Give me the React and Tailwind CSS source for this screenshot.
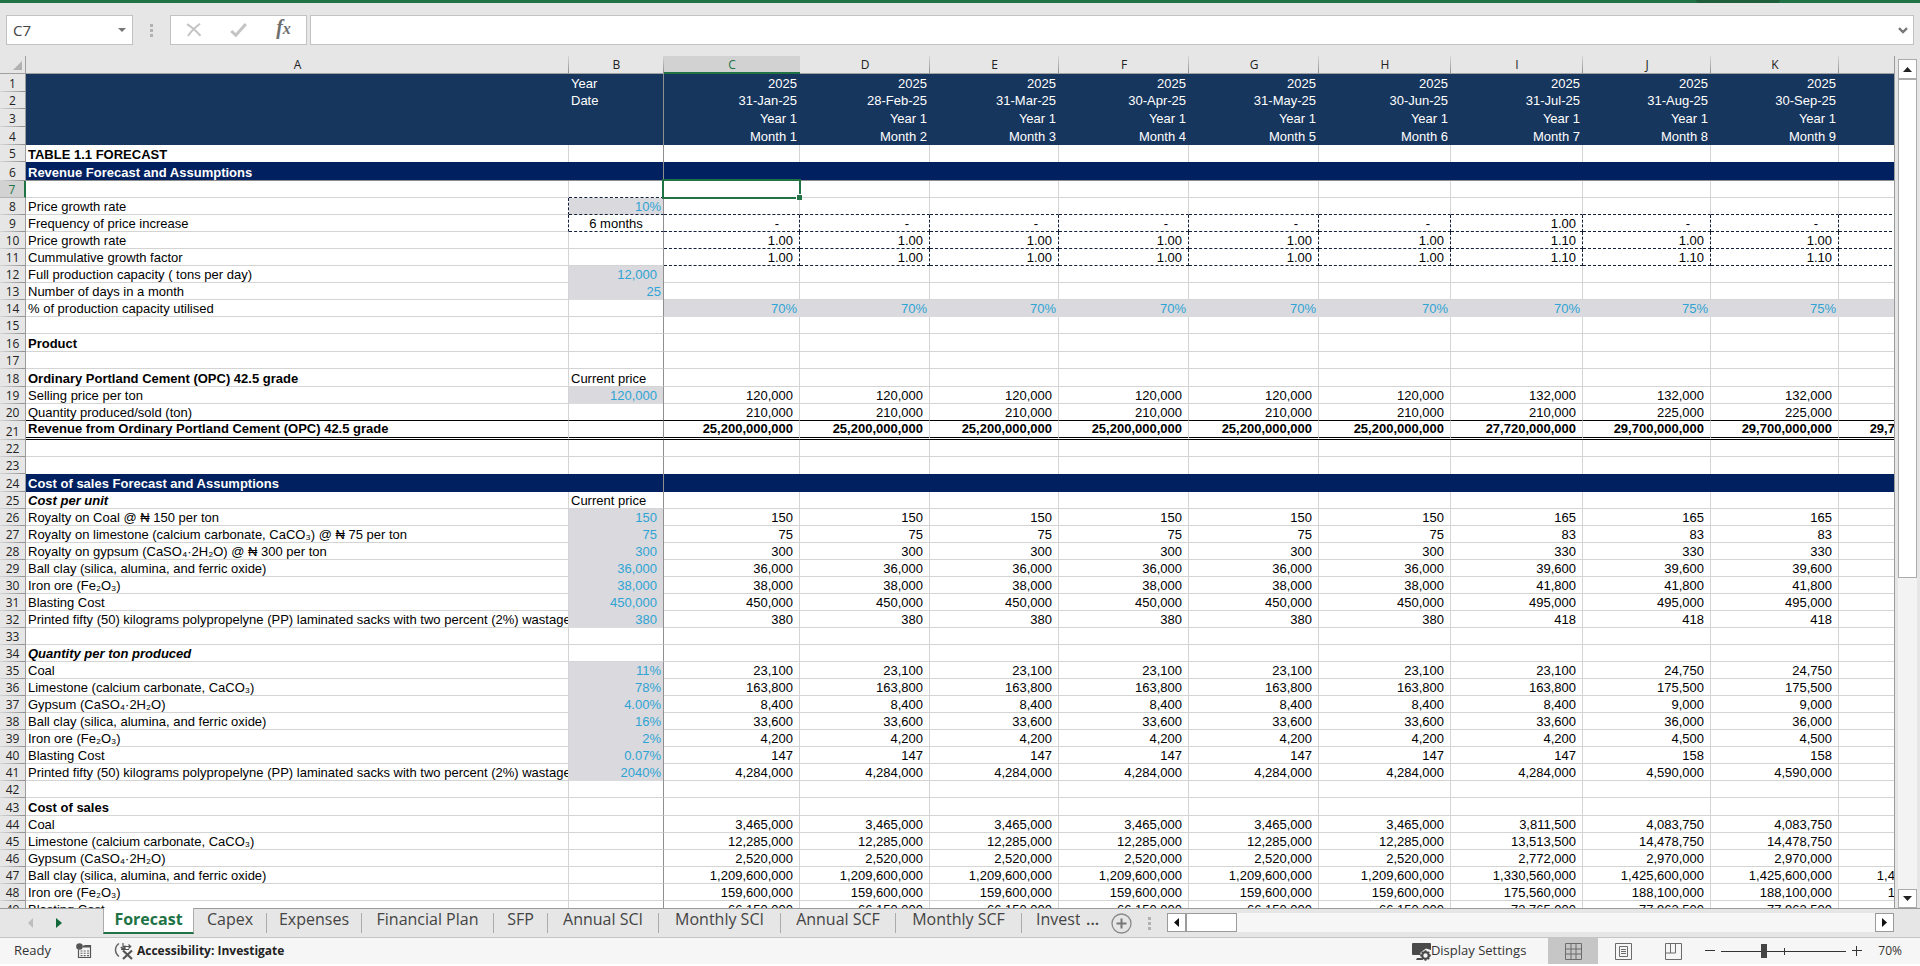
import React from "react";

const COLUMNS = [
  { name: "A", width: "w-[543px]" },
  { name: "B", width: "w-[95px]" },
  { name: "C", width: "w-[136px]" },
  { name: "D", width: "w-[130px]" },
  { name: "E", width: "w-[129px]" },
  { name: "F", width: "w-[130px]" },
  { name: "G", width: "w-[130px]" },
  { name: "H", width: "w-[132px]" },
  { name: "I", width: "w-[132px]" },
  { name: "J", width: "w-[128px]" },
  { name: "K", width: "w-[128px]" },
  { name: "", width: "w-[128px]" },
];

const months = (first, july, later, last = "") => [
  first, first, first, first, first, first, july, later, later, last,
];

const ROWS = [
  { n: 1, kind: "head", h: 18, b: "Year", v: months("2025", "2025", "2025") },
  {
    n: 2, kind: "head", h: 17, b: "Date",
    v: ["31-Jan-25", "28-Feb-25", "31-Mar-25", "30-Apr-25", "31-May-25", "30-Jun-25", "31-Jul-25", "31-Aug-25", "30-Sep-25", ""],
  },
  { n: 3, kind: "head", h: 18, v: months("Year 1", "Year 1", "Year 1") },
  {
    n: 4, kind: "head", h: 18,
    v: ["Month 1", "Month 2", "Month 3", "Month 4", "Month 5", "Month 6", "Month 7", "Month 8", "Month 9", ""],
  },
  { n: 5, h: 17, a: "TABLE 1.1 FORECAST", bold: true },
  { n: 6, kind: "band", h: 19, a: "Revenue Forecast and Assumptions", bold: true },
  { n: 7, h: 17 },
  { n: 8, h: 17, a: "Price growth rate", b: "10%", bStyle: "fill" },
  { n: 9, h: 17, a: "Frequency of price increase", b: "6 months", bStyle: "center", v: months("-", "1.00", "-") },
  { n: 10, h: 17, a: "Price growth rate", v: months("1.00", "1.10", "1.00") },
  { n: 11, h: 17, a: "Cummulative growth factor", v: months("1.00", "1.10", "1.10") },
  { n: 12, h: 17, a: "Full production capacity ( tons per day)", b: "12,000", bStyle: "fill" },
  { n: 13, h: 17, a: "Number of days in a month", b: "25", bStyle: "fill", tight: true },
  { n: 14, kind: "shade", h: 17, a: "% of production capacity utilised", v: months("70%", "70%", "75%") },
  { n: 15, h: 17 },
  { n: 16, h: 18, a: "Product", bold: true },
  { n: 17, h: 17 },
  { n: 18, h: 18, a: "Ordinary Portland Cement (OPC) 42.5 grade", bold: true, b: "Current price" },
  { n: 19, h: 17, a: "Selling price per ton", b: "120,000", bStyle: "fill", v: months("120,000", "132,000", "132,000") },
  { n: 20, h: 17, a: "Quantity produced/sold (ton)", v: months("210,000", "210,000", "225,000") },
  {
    n: 21, kind: "total", h: 19, a: "Revenue from Ordinary Portland Cement (OPC) 42.5 grade", bold: true,
    v: months("25,200,000,000", "27,720,000,000", "29,700,000,000", "29,700,000,000"),
  },
  { n: 22, h: 17 },
  { n: 23, h: 17 },
  { n: 24, kind: "band", h: 18, a: "Cost of sales Forecast and Assumptions", bold: true },
  { n: 25, h: 17, a: "Cost per unit", bold: true, italic: true, b: "Current price" },
  { n: 26, h: 17, a: "Royalty on Coal @ ₦ 150 per ton", b: "150", bStyle: "fill", v: months("150", "165", "165") },
  { n: 27, h: 17, a: "Royalty on limestone (calcium carbonate, CaCO₃) @ ₦ 75 per ton", b: "75", bStyle: "fill", v: months("75", "83", "83") },
  { n: 28, h: 17, a: "Royalty on gypsum (CaSO₄·2H₂O) @ ₦ 300 per ton", b: "300", bStyle: "fill", v: months("300", "330", "330") },
  { n: 29, h: 17, a: "Ball clay (silica, alumina, and ferric oxide)", b: "36,000", bStyle: "fill", v: months("36,000", "39,600", "39,600") },
  { n: 30, h: 17, a: "Iron ore (Fe₂O₃)", b: "38,000", bStyle: "fill", v: months("38,000", "41,800", "41,800") },
  { n: 31, h: 17, a: "Blasting Cost", b: "450,000", bStyle: "fill", v: months("450,000", "495,000", "495,000") },
  {
    n: 32, h: 17, a: "Printed fifty (50) kilograms polypropelyne (PP) laminated sacks with two percent (2%) wastage",
    b: "380", bStyle: "fill", v: months("380", "418", "418"),
  },
  { n: 33, h: 17 },
  { n: 34, h: 17, a: "Quantity per ton produced", bold: true, italic: true },
  { n: 35, h: 17, a: "Coal", b: "11%", bStyle: "fill", v: months("23,100", "23,100", "24,750") },
  { n: 36, h: 17, a: "Limestone (calcium carbonate, CaCO₃)", b: "78%", bStyle: "fill", v: months("163,800", "163,800", "175,500") },
  { n: 37, h: 17, a: "Gypsum (CaSO₄·2H₂O)", b: "4.00%", bStyle: "fill", v: months("8,400", "8,400", "9,000") },
  { n: 38, h: 17, a: "Ball clay (silica, alumina, and ferric oxide)", b: "16%", bStyle: "fill", v: months("33,600", "33,600", "36,000") },
  { n: 39, h: 17, a: "Iron ore (Fe₂O₃)", b: "2%", bStyle: "fill", v: months("4,200", "4,200", "4,500") },
  { n: 40, h: 17, a: "Blasting Cost", b: "0.07%", bStyle: "fill", v: months("147", "147", "158") },
  {
    n: 41, h: 17, a: "Printed fifty (50) kilograms polypropelyne (PP) laminated sacks with two percent (2%) wastage",
    b: "2040%", bStyle: "fill", v: months("4,284,000", "4,284,000", "4,590,000"),
  },
  { n: 42, h: 17 },
  { n: 43, h: 18, a: "Cost of sales", bold: true },
  { n: 44, h: 17, a: "Coal", v: months("3,465,000", "3,811,500", "4,083,750") },
  { n: 45, h: 17, a: "Limestone (calcium carbonate, CaCO₃)", v: months("12,285,000", "13,513,500", "14,478,750") },
  { n: 46, h: 17, a: "Gypsum (CaSO₄·2H₂O)", v: months("2,520,000", "2,772,000", "2,970,000") },
  {
    n: 47, h: 17, a: "Ball clay (silica, alumina, and ferric oxide)",
    v: months("1,209,600,000", "1,330,560,000", "1,425,600,000", "1,425,600,000"),
  },
  { n: 48, h: 17, a: "Iron ore (Fe₂O₃)", v: months("159,600,000", "175,560,000", "188,100,000", "188,100,000") },
  { n: 49, h: 17, a: "Blasting Cost", v: months("66,150,000", "72,765,000", "77,962,500") },
];

const HEIGHTS = { 17: "h-[17px]", 18: "h-[18px]", 19: "h-[19px]" };
const DASH_BOTTOM = "border-b border-b-[#14213d] [border-bottom-style:dashed]";
const DASH_RIGHT = "border-r border-r-[#14213d] [border-right-style:dashed]";

function bottomBorder(row, col) {
  if (row.kind === "head" || row.n === 5 || row.n === 23) return "";
  if (row.n === 6) return "border-b border-b-[#8f8f8f]";
  if (row.n === 24) return "";
  if (row.n === 20) return "border-b border-b-black";
  if (row.n === 21) return "border-b-3 border-b-black [border-bottom-style:double]";
  if (col === 1 && row.n >= 7 && row.n <= 9) return DASH_BOTTOM;
  if (col > 1 && row.n >= 8 && row.n <= 11) return DASH_BOTTOM;
  if (col === 1 && row.bStyle === "fill") return "";
  if (col > 1 && row.kind === "shade") return "";
  return "border-b border-b-[#d4d4d4]";
}

function rightBorder(row, col) {
  if (col === 1) return "border-r border-r-[#8f8f8f]";
  if (row.kind === "head" || row.kind === "band") return "";
  if (col === 0 && (row.n === 8 || row.n === 9)) return DASH_RIGHT;
  if (col > 1 && row.n >= 9 && row.n <= 11) return DASH_RIGHT;
  if (col > 1 && row.kind === "shade") return "";
  return "border-r border-r-[#d4d4d4]";
}

function background(row, col) {
  if (row.kind === "head") return "bg-[#17365d] text-white";
  if (row.kind === "band") return "bg-[#002060] text-white";
  if (col === 1 && row.bStyle === "fill") return "bg-[#d9d9de] text-[#2fa4d3]";
  if (col > 1 && row.kind === "shade") return "bg-[#d9d9de] text-[#2fa4d3]";
  return "bg-white text-black";
}

function alignment(row, col, text) {
  if (col === 0) return "text-left pl-[2px]";
  if (col === 1) {
    if (row.bStyle === "center") return "text-center";
    if (row.bStyle !== "fill") return "text-left pl-[2px]";
    return text.endsWith("%") || row.tight ? "text-right pr-[2px]" : "text-right pr-[6px]";
  }
  if (text === "-") return "text-right pr-[20px]";
  return row.kind === "head" || row.kind === "shade" ? "text-right pr-[3px]" : "text-right pr-[6px]";
}

function Cell({ row, col }) {
  const text = (col === 0 ? row.a : col === 1 ? row.b : row.v && row.v[col - 2]) || "";
  const weight = (col === 0 && row.bold) || row.kind === "total" ? "font-bold" : "";
  const selected = row.n === 7 && col === 2;
  const line = bottomBorder(row, col);
  const classes = [
    "p-0 align-bottom whitespace-nowrap",
    selected ? "relative" : "overflow-hidden",
    background(row, col),
    line,
    (line && row.kind !== "total") || row.n === 5 ? "leading-[14px]" : "leading-4",
    rightBorder(row, col),
    alignment(row, col, text),
    weight,
    col === 0 && row.italic ? "italic" : "",
  ].join(" ");
  return (
    <td className={classes}>
      {text}
      {selected && (
        <span className="absolute -top-[2px] -right-[2px] -bottom-[2px] -left-[2px] z-10 border-2 border-[#217346]">
          <span className="absolute -right-[3px] -bottom-[3px] size-[6px] border-t border-l border-white bg-[#217346]" />
        </span>
      )}
    </td>
  );
}

function Sheet() {
  return (
    <table className="w-[1841px] table-fixed border-separate border-spacing-0 font-['Liberation_Sans',Arial,sans-serif] text-[13px] leading-4">
      <colgroup>
        <col className="w-[26px]" />
        {COLUMNS.map((c, i) => (
          <col key={i} className={c.width} />
        ))}
      </colgroup>
      <thead className="font-['Open_Sans',sans-serif] text-[12px] text-[#222]">
        <tr className="h-[18px]">
          <th className="border-r border-b border-[#a0a0a0] bg-[#e6e6e6] p-0 align-bottom">
            <svg className="ml-auto mr-[3px] mb-[3px] block size-[9px]" viewBox="0 0 9 9" aria-hidden="true">
              <path d="M9 0v9H0z" fill="#b1b1b1" />
            </svg>
          </th>
          {COLUMNS.map((c, i) => (
            <th
              key={i}
              scope="col"
              className={
                c.name === "C"
                  ? "border-b-2 border-b-[#217346] bg-[#d2d2d2] p-0 align-bottom leading-[15px] font-normal text-[#217346]"
                  : "border-b border-b-[#a0a0a0] bg-[#e6e6e6] bg-[linear-gradient(#d6d6d6,#8f8f8f)] bg-[length:1px_100%] bg-right bg-no-repeat p-0 align-bottom font-normal"
              }
            >
              {c.name}
            </th>
          ))}
        </tr>
      </thead>
      <tbody>
        {ROWS.map((row) => (
          <tr key={row.n} className={HEIGHTS[row.h]}>
            <th
              scope="row"
              className={
                "p-0 text-center align-bottom font-['Open_Sans',sans-serif] text-[12px] font-normal " +
                (row.n === 7
                  ? "border-r-2 border-b border-r-[#217346] border-b-[#b5b5b5] bg-[#d2d2d2] leading-[14px] text-[#217346]"
                  : "border-r border-r-[#9b9b9b] bg-[#e6e6e6] bg-[linear-gradient(90deg,#d6d6d6,#8f8f8f)] bg-[length:100%_1px] bg-bottom bg-no-repeat text-[#222]")
              }
            >
              {row.n}
            </th>
            {COLUMNS.map((c, i) => (
              <Cell key={i} row={row} col={i} />
            ))}
          </tr>
        ))}
      </tbody>
    </table>
  );
}

function FormulaBar() {
  return (
    <div className="flex h-[53px] shrink-0 items-start px-[6px] pt-3">
      <div className="flex h-[30px] w-[127px] items-center border border-[#c2c2c2] bg-white">
        <input
          aria-label="Name Box"
          defaultValue="C7"
          className="min-w-0 flex-1 bg-transparent pl-[6px] text-[15px] text-[#444] outline-none"
        />
        <button aria-label="Name list" className="flex h-full w-5 items-center justify-center">
          <svg className="h-1 w-[8px]" viewBox="0 0 8 4" aria-hidden="true">
            <path d="M0 0h8L4 4z" fill="#777" />
          </svg>
        </button>
      </div>
      <div className="flex h-[30px] w-[37px] flex-col items-center justify-center gap-[2px]">
        <span className="size-[3px] bg-[#b1b1b1]" />
        <span className="size-[3px] bg-[#b1b1b1]" />
        <span className="size-[3px] bg-[#b1b1b1]" />
      </div>
      <div className="flex h-[30px] w-[137px] items-center border border-[#c2c2c2] bg-white">
        <button aria-label="Cancel" className="flex flex-1 justify-center">
          <svg className="h-[14px] w-4" viewBox="0 0 16 14" aria-hidden="true">
            <path d="M1 1.2C5 3.500 10 8 14.500 12.800M14 .8C9 4.500 4.500 9 2 13" fill="none" stroke="#c4c4c4" strokeWidth="2" />
          </svg>
        </button>
        <button aria-label="Enter" className="flex flex-1 justify-center">
          <svg className="h-[14px] w-[17px]" viewBox="0 0 17 14" aria-hidden="true">
            <path d="M1.200 8l4.600 4.200L15.800 1" fill="none" stroke="#c4c4c4" strokeWidth="3" />
          </svg>
        </button>
        <button
          aria-label="Insert Function"
          className="flex-1 pb-1 text-center font-['Liberation_Serif',serif] text-[20px] leading-6 font-bold text-[#6e6e6e] italic"
        >
          f<span className="text-[16px]">x</span>
        </button>
      </div>
      <div className="ml-[3px] flex h-[30px] flex-1 items-center border border-[#c2c2c2] bg-white">
        <input aria-label="Formula Bar" className="h-full min-w-0 flex-1 bg-transparent px-2 outline-none" />
        <button aria-label="Expand Formula Bar" className="flex h-full w-5 items-center justify-center">
          <svg className="h-[7px] w-[10px]" viewBox="0 0 10 7" aria-hidden="true">
            <path d="M1 1.200l4 3.800 4-3.800" fill="none" stroke="#777" strokeWidth="2.400" />
          </svg>
        </button>
      </div>
    </div>
  );
}

function VerticalScroll() {
  return (
    <div className="flex w-[25px] shrink-0 flex-col pt-[3px] pr-[3px] pl-[3px]">
      <button aria-label="Scroll up" className="flex h-[20px] shrink-0 items-center justify-center border border-[#ababab] bg-white">
        <svg className="h-[5px] w-[9px]" viewBox="0 0 9 5" aria-hidden="true">
          <path d="M4.500 0L9 5H0z" fill="#222" />
        </svg>
      </button>
      <div className="flex-[499] border border-[#ababab] bg-white" />
      <div className="flex-[312] bg-[#f3f3f3]" />
      <button aria-label="Scroll down" className="flex h-[19px] shrink-0 items-center justify-center border border-[#ababab] bg-white">
        <svg className="h-[5px] w-[9px]" viewBox="0 0 9 5" aria-hidden="true">
          <path d="M4.500 5L9 0H0z" fill="#222" />
        </svg>
      </button>
    </div>
  );
}

const TABS = [
  { name: "Capex", width: "min-w-[73px]" },
  { name: "Expenses", width: "min-w-[95px]" },
  { name: "Financial Plan", width: "min-w-[132px]" },
  { name: "SFP", width: "min-w-[54px]" },
  { name: "Annual SCI", width: "min-w-[111px]" },
  { name: "Monthly SCI", width: "min-w-[122px]" },
  { name: "Annual SCF", width: "min-w-[115px]" },
  { name: "Monthly SCF", width: "min-w-[126px]" },
];

function TabBar() {
  return (
    <div className="flex h-[29px] shrink-0 items-start border-t border-[#9b9b9b] pr-[26px]">
      <div className="flex h-[28px] w-[103px] shrink-0 items-center gap-[23px] pl-7">
        <button aria-label="Previous sheet">
          <svg className="h-[10px] w-[5px]" viewBox="0 0 5 10" aria-hidden="true">
            <path d="M5 0v10L0 5z" fill="#bdbdbd" />
          </svg>
        </button>
        <button aria-label="Next sheet">
          <svg className="h-[10px] w-[6px]" viewBox="0 0 6 10" aria-hidden="true">
            <path d="M0 0v10l6-5z" fill="#12683a" />
          </svg>
        </button>
      </div>
      <div className="-mt-px flex items-start text-[16px] leading-[22px] text-[#444]">
        <button className="h-[26px] w-[91px] border-x border-b-2 border-x-[#ababab] border-b-[#217346] bg-white pb-[2px] font-bold text-[#217346]">
          Forecast
        </button>
        {TABS.map((t) => (
          <button key={t.name} className={"flex h-[25px] items-start whitespace-nowrap " + t.width}>
            <span className="flex-1 px-2 text-center">{t.name}</span>
            <span className="mt-[5px] h-5 w-px bg-[#ababab]" />
          </button>
        ))}
        <button className="w-[58px] overflow-hidden pl-[14px] text-left whitespace-nowrap">Invest</button>
        <button aria-label="More sheets" className="w-[31px] pl-[6px] text-left font-semibold">...</button>
      </div>
      <button aria-label="New sheet" className="mt-1 shrink-0">
        <svg className="size-[21px]" viewBox="0 0 21 21" aria-hidden="true">
          <circle cx="10.500" cy="10.500" r="9.500" fill="none" stroke="#8a8a8a" strokeWidth="1.300" />
          <path d="M10.500 5.500v10M5.500 10.500h10" stroke="#777" strokeWidth="2" />
        </svg>
      </button>
      <div className="flex h-[28px] w-[35px] shrink-0 flex-col items-center justify-center gap-[2px]">
        <span className="size-[3px] bg-[#b1b1b1]" />
        <span className="size-[3px] bg-[#b1b1b1]" />
        <span className="size-[3px] bg-[#b1b1b1]" />
      </div>
      <div className="mt-1 flex h-[19px] flex-1 bg-[#f6f6f6]">
        <button aria-label="Scroll left" className="flex w-[19px] items-center justify-center border border-[#9b9b9b] bg-white">
          <svg className="h-[9px] w-[5px]" viewBox="0 0 5 9" aria-hidden="true">
            <path d="M5 0v9L0 4.500z" fill="#111" />
          </svg>
        </button>
        <div className="w-[51px] border border-[#9b9b9b] bg-white" />
        <button aria-label="Scroll right" className="ml-auto flex w-[19px] items-center justify-center border border-[#9b9b9b] bg-white">
          <svg className="h-[9px] w-[5px]" viewBox="0 0 5 9" aria-hidden="true">
            <path d="M0 0v9l5-4.500z" fill="#111" />
          </svg>
        </button>
      </div>
    </div>
  );
}

function StatusBar() {
  return (
    <div className="flex h-[27px] shrink-0 items-stretch border-t border-[#c4c4c4] bg-[#f6f6f6] text-[13px] text-[#333]">
      <span className="flex w-[76px] items-center pl-[14px]">Ready</span>
      <button aria-label="Record macro" className="flex items-center">
        <svg className="size-4" viewBox="0 0 16 16" aria-hidden="true">
          <path d="M2.500 6.500v8h12v-12h-6" fill="none" stroke="#555" strokeWidth="1.200" />
          <circle cx="3.500" cy="3.500" r="3.300" fill="#555" />
          <path d="M7 2.500h7.500v2H7z" fill="#555" />
          <path d="M4.500 8h2M7.700 8h2M11 8h2M4.500 10.300h2M7.700 10.300h2M11 10.300h2M4.500 12.600h2M7.700 12.600h2M11 12.600h2" stroke="#666" strokeWidth="1.100" />
        </svg>
      </button>
      <button className="ml-[22px] flex items-center gap-1 text-[12px] font-bold text-[#222]">
        <svg className="h-[18px] w-[19px]" viewBox="0 0 19 18" aria-hidden="true">
          <path d="M5 1.500C.5 4.500.2 11 5 14.500" fill="none" stroke="#666" strokeWidth="1.500" />
          <path d="M9 1v6M6.800 5L9 7.300 11.200 5M11 8V3.500M9.500 4.500h7M14.500 2.500l2.200 2-2.200 2M7 7.500h8" fill="none" stroke="#555" strokeWidth="1.200" />
          <path d="M9 8.500L18 17M18 8.500L9 17" stroke="#555" strokeWidth="2.200" />
        </svg>
        Accessibility: Investigate
      </button>
      <div className="ml-auto flex items-stretch pr-[18px]">
        <button className="mr-[22px] flex items-center">
          <svg className="h-[19px] w-[19px]" viewBox="0 0 19 19" aria-hidden="true">
            <path d="M1.500 1h16.500a1 1 0 011 1v6l-5-1.500-5.500 4V13H1a1 1 0 01-1-1V2a1 1 0 011-1zM5 16h4.500l1.500 2H4z" fill="#4a4a4a" />
            <circle cx="13.500" cy="13.500" r="3.300" fill="none" stroke="#4a4a4a" strokeWidth="2.200" />
            <path d="M13.500 8.200v2M13.500 16.800v2M8.200 13.500h2M16.800 13.500h2M9.800 9.800l1.400 1.400M15.800 15.800l1.400 1.400M17.200 9.800l-1.400 1.400M11.200 15.800l-1.400 1.400" stroke="#4a4a4a" strokeWidth="1.800" />
          </svg>
          Display Settings
        </button>
        <button aria-label="Normal view" className="flex w-[50px] items-center justify-center bg-[#c6c6c6]">
          <svg className="size-[17px]" viewBox="0 0 17 17" aria-hidden="true">
            <path d="M.5.5h16v16H.5zM.5 6h16M.5 11h16M6 .5v16M11 .5v16" fill="none" stroke="#6b6b6b" />
          </svg>
        </button>
        <button aria-label="Page layout view" className="flex w-[50px] items-center justify-center">
          <svg className="size-[17px]" viewBox="0 0 17 17" aria-hidden="true">
            <path d="M.5.5h16v16H.5zM4.500 3.500h8v10h-8zM6 6.500h5M6 8.500h5M6 10.500h5" fill="none" stroke="#6b6b6b" />
          </svg>
        </button>
        <button aria-label="Page break preview" className="flex w-[50px] items-center justify-center">
          <svg className="size-[17px]" viewBox="0 0 17 17" aria-hidden="true">
            <path d="M.5.5h16v16H.5zM5.500.5v9.500M.5 10H10.500V.5" fill="none" stroke="#6b6b6b" />
          </svg>
        </button>
        <button aria-label="Zoom out" className="flex w-[23px] items-center justify-center">
          <svg className="size-[10px]" viewBox="0 0 10 10" aria-hidden="true">
            <path d="M0 4.500h10" stroke="#333" />
          </svg>
        </button>
        <div className="relative flex w-[125px] items-center">
          <input
            type="range"
            aria-label="Zoom"
            min="10"
            max="190"
            defaultValue="70"
            className="h-[14px] w-full appearance-none bg-[linear-gradient(#333,#333)] bg-[length:100%_1px] bg-center bg-no-repeat [&::-webkit-slider-thumb]:h-[14px] [&::-webkit-slider-thumb]:w-[6px] [&::-webkit-slider-thumb]:appearance-none [&::-webkit-slider-thumb]:bg-[#444]"
          />
          <span className="absolute top-[10px] left-1/2 h-[7px] w-px bg-[#333]" />
        </div>
        <button aria-label="Zoom in" className="flex w-[22px] items-center justify-center">
          <svg className="size-[10px]" viewBox="0 0 10 10" aria-hidden="true">
            <path d="M0 4.500h10M4.500 0v10" stroke="#333" />
          </svg>
        </button>
        <span className="flex items-center pl-[10px] text-[12px]">70%</span>
      </div>
    </div>
  );
}

export default function App() {
  return (
    <div className="flex h-screen flex-col overflow-hidden bg-[#e6e6e6] font-['Open_Sans',sans-serif]">
      <div className="flex h-[3px] shrink-0 justify-end bg-[#217346] pr-[140px]">
        <span className="w-[84px] rounded-b-full bg-[#1e5e3b]" />
      </div>
      <FormulaBar />
      <div className="flex min-h-0 flex-1">
        <div className="min-w-0 flex-1 overflow-hidden border-r border-[#9b9b9b]">
          <Sheet />
        </div>
        <VerticalScroll />
      </div>
      <TabBar />
      <StatusBar />
      <div className="h-[2px] shrink-0 bg-white" />
    </div>
  );
}
